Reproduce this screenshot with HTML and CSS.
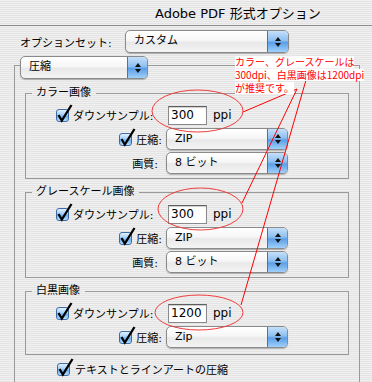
FILE: index.html
```html
<!DOCTYPE html>
<html lang="ja">
<head>
    <meta charset="UTF-8">
    <title>Adobe PDF 形式オプション</title>
    <link rel="stylesheet" href="styles.css">
</head>
<body>
    <div class="titlebar">Adobe PDF 形式オプション</div>

    <div class="setrow">
        <span class="setlabel">オプションセット:</span>
        <div class="popup big"><span class="ptext">カスタム</span><span class="arrows"></span></div>
    </div>

    <div class="outer">
        <div class="popup tab"><span class="ptext">圧縮</span><span class="arrows"></span></div>

        <fieldset class="group">
            <legend>カラー画像</legend>
            <div class="row down">
                <div class="lab"><span class="cb"><svg viewBox="0 0 18 18"><path d="M2.5 11 L5.8 16.5 L15.5 1"/></svg></span>ダウンサンプル:</div>
                <div class="field">300</div><span class="unit">ppi</span>
            </div>
            <div class="row">
                <div class="lab"><span class="cb"><svg viewBox="0 0 18 18"><path d="M2.5 11 L5.8 16.5 L15.5 1"/></svg></span>圧縮:</div>
                <div class="popup small"><span class="ptext">ZIP</span><span class="arrows"></span></div>
            </div>
            <div class="row">
                <div class="lab q">画質:</div>
                <div class="popup small"><span class="ptext">8 ビット</span><span class="arrows"></span></div>
            </div>
        </fieldset>

        <fieldset class="group">
            <legend>グレースケール画像</legend>
            <div class="row down">
                <div class="lab"><span class="cb"><svg viewBox="0 0 18 18"><path d="M2.5 11 L5.8 16.5 L15.5 1"/></svg></span>ダウンサンプル:</div>
                <div class="field">300</div><span class="unit">ppi</span>
            </div>
            <div class="row">
                <div class="lab"><span class="cb"><svg viewBox="0 0 18 18"><path d="M2.5 11 L5.8 16.5 L15.5 1"/></svg></span>圧縮:</div>
                <div class="popup small"><span class="ptext">ZIP</span><span class="arrows"></span></div>
            </div>
            <div class="row">
                <div class="lab q">画質:</div>
                <div class="popup small"><span class="ptext">8 ビット</span><span class="arrows"></span></div>
            </div>
        </fieldset>

        <fieldset class="group last">
            <legend>白黒画像</legend>
            <div class="row down">
                <div class="lab"><span class="cb"><svg viewBox="0 0 18 18"><path d="M2.5 11 L5.8 16.5 L15.5 1"/></svg></span>ダウンサンプル:</div>
                <div class="field">1200</div><span class="unit">ppi</span>
            </div>
            <div class="row">
                <div class="lab"><span class="cb"><svg viewBox="0 0 18 18"><path d="M2.5 11 L5.8 16.5 L15.5 1"/></svg></span>圧縮:</div>
                <div class="popup small"><span class="ptext">Zip</span><span class="arrows"></span></div>
            </div>
        </fieldset>

        <div class="textart"><span class="cb"><svg viewBox="0 0 18 18"><path d="M2.5 11 L5.8 16.5 L15.5 1"/></svg></span>テキストとラインアートの圧縮</div>
    </div>

    <!-- 赤い注釈 -->
    <svg class="marks" width="372" height="382" viewBox="0 0 372 382">
        <ellipse cx="197.5" cy="111" rx="45.5" ry="21"/>
        <ellipse cx="200.5" cy="209" rx="42.5" ry="21"/>
        <ellipse cx="199" cy="312.5" rx="44" ry="17.5"/>
        <line x1="297" y1="89" x2="243" y2="112"/>
        <line x1="297" y1="89" x2="242" y2="203"/>
        <line x1="306" y1="80" x2="241" y2="305"/>
    </svg>
    <div class="note">
        <span>カラー、グレースケールは</span>
        <span>300dpi、白黒画像は1200dpi</span>
        <span>が推奨です。</span>
    </div>
</body>
</html>
```

FILE: styles.css
```css
body {
    margin: 0;
    width: 372px;
    height: 382px;
    overflow: hidden;
    position: relative;
    font-family: "DejaVu Sans", "Noto Sans CJK JP", sans-serif;
    font-size: 11px;
    color: #000;
    background: repeating-linear-gradient(to bottom, #f0f0f0 0 1px, #e4e4e4 1px 2px);
}

.titlebar {
    height: 26px;
    box-sizing: border-box;
    border-bottom: 1px solid #8c8c8c;
    padding-left: 155px;
    font-size: 13px;
    line-height: 27px;
}

.setrow {
    display: flex;
    align-items: center;
    margin-top: 4px;
    padding-left: 20px;
    height: 23px;
}

.setlabel {
    width: 105px;
}

/* ポップアップメニュー */
.popup {
    display: flex;
    box-sizing: border-box;
    height: 22px;
    border: 1px solid #8a8a8a;
    border-radius: 5px;
    overflow: hidden;
    background: linear-gradient(to bottom, #ffffff 0%, #f6f6f6 45%, #e8e8e8 55%, #f4f4f4 100%);
    box-shadow: 0 1px 1px rgba(0, 0, 0, 0.25);
}

.ptext {
    flex: 1;
    padding-left: 8px;
    line-height: 20px;
    white-space: nowrap;
}

.arrows {
    width: 19px;
    border-left: 1px solid #4a74a8;
    background: linear-gradient(to bottom, #c4e0fa 0%, #8ebff0 45%, #5b9ee6 55%, #9fd0fb 100%);
    display: flex;
    flex-direction: column;
    align-items: center;
    justify-content: center;
    gap: 2px;
}

.arrows::before {
    content: "";
    border-left: 3px solid transparent;
    border-right: 3px solid transparent;
    border-bottom: 4px solid #111;
}

.arrows::after {
    content: "";
    border-left: 3px solid transparent;
    border-right: 3px solid transparent;
    border-top: 4px solid #111;
}

.popup.big {
    width: 164px;
    height: 23px;
}

.popup.big .arrows {
    width: 20px;
}

.popup.tab {
    width: 128px;
    height: 23px;
    margin-top: -10px;
    margin-left: 5px;
}

.popup.small {
    width: 122px;
}

/* グループ */
.outer {
    margin-top: 12px;
    margin-left: 14px;
    width: 346px;
    height: 317px;
    box-sizing: border-box;
    border: 1px solid #9a9a9a;
    border-bottom: none;
}

.group {
    margin: 7px 0 0 10px;
    width: 324px;
    box-sizing: border-box;
    padding: 0 0 4px 0;
    border: 1px solid #9a9a9a;
    min-inline-size: 0;
}

.group + .group {
    margin-top: 6px;
}

.group.last {
    padding-bottom: 6px;
}

.group legend {
    padding: 0 5px 0 4px;
    margin-left: 6px;
    line-height: 14px;
}

.row {
    display: flex;
    align-items: center;
    margin-top: 2px;
}

.row.down {
    height: 20px;
    margin-top: 5px;
}

.row.down + .row {
    margin-top: 3px;
}

.lab {
    width: 140px;
    box-sizing: border-box;
    display: flex;
    align-items: center;
    justify-content: flex-end;
    padding-right: 4px;
    white-space: nowrap;
}

.lab.q {
    padding-right: 8px;
}

.row.down .lab {
    width: 142px;
    justify-content: flex-start;
    padding-left: 30px;
    padding-right: 0;
}

/* チェックボックス */
.cb {
    position: relative;
    width: 13px;
    height: 13px;
    box-sizing: border-box;
    border: 1px solid #3e6aa6;
    border-radius: 3px;
    background: linear-gradient(to bottom, #e2f1ff 0%, #a9d2fa 40%, #6eb0f0 60%, #b6e0ff 100%);
    margin-right: 4px;
    flex: none;
}

.cb svg {
    position: absolute;
    left: -1px;
    top: -6px;
    width: 18px;
    height: 18px;
    overflow: visible;
}

.cb path {
    fill: none;
    stroke: #000;
    stroke-width: 2.3;
}

.field {
    width: 39px;
    height: 19px;
    box-sizing: border-box;
    background: #fff;
    border: 1px solid #8a8a8a;
    border-top-color: #5e5e5e;
    box-shadow: inset 0 1px 1px rgba(0, 0, 0, 0.2);
    font-size: 12px;
    line-height: 17px;
    padding-left: 2px;
    overflow: hidden;
    white-space: nowrap;
}

.unit {
    margin-left: 6px;
    font-size: 12px;
}

.textart {
    display: flex;
    align-items: center;
    margin-top: 6px;
    padding-left: 42px;
    font-size: 11px;
}

.textart .cb {
    margin-right: 5px;
}

/* 注釈 */
.marks {
    position: absolute;
    left: 0;
    top: 0;
    pointer-events: none;
}

.marks ellipse {
    fill: none;
    stroke: #f03c3c;
    stroke-width: 1;
}

.marks line {
    stroke: #ff0000;
    stroke-width: 1;
}

.note {
    position: absolute;
    left: 235px;
    top: 56px;
    font-family: "Noto Sans CJK JP", sans-serif;
    font-size: 10px;
    color: #ff0000;
}

.note span {
    display: block;
    width: fit-content;
    background: #fff;
    line-height: 12px;
    margin-bottom: 1px;
    white-space: nowrap;
}
```
